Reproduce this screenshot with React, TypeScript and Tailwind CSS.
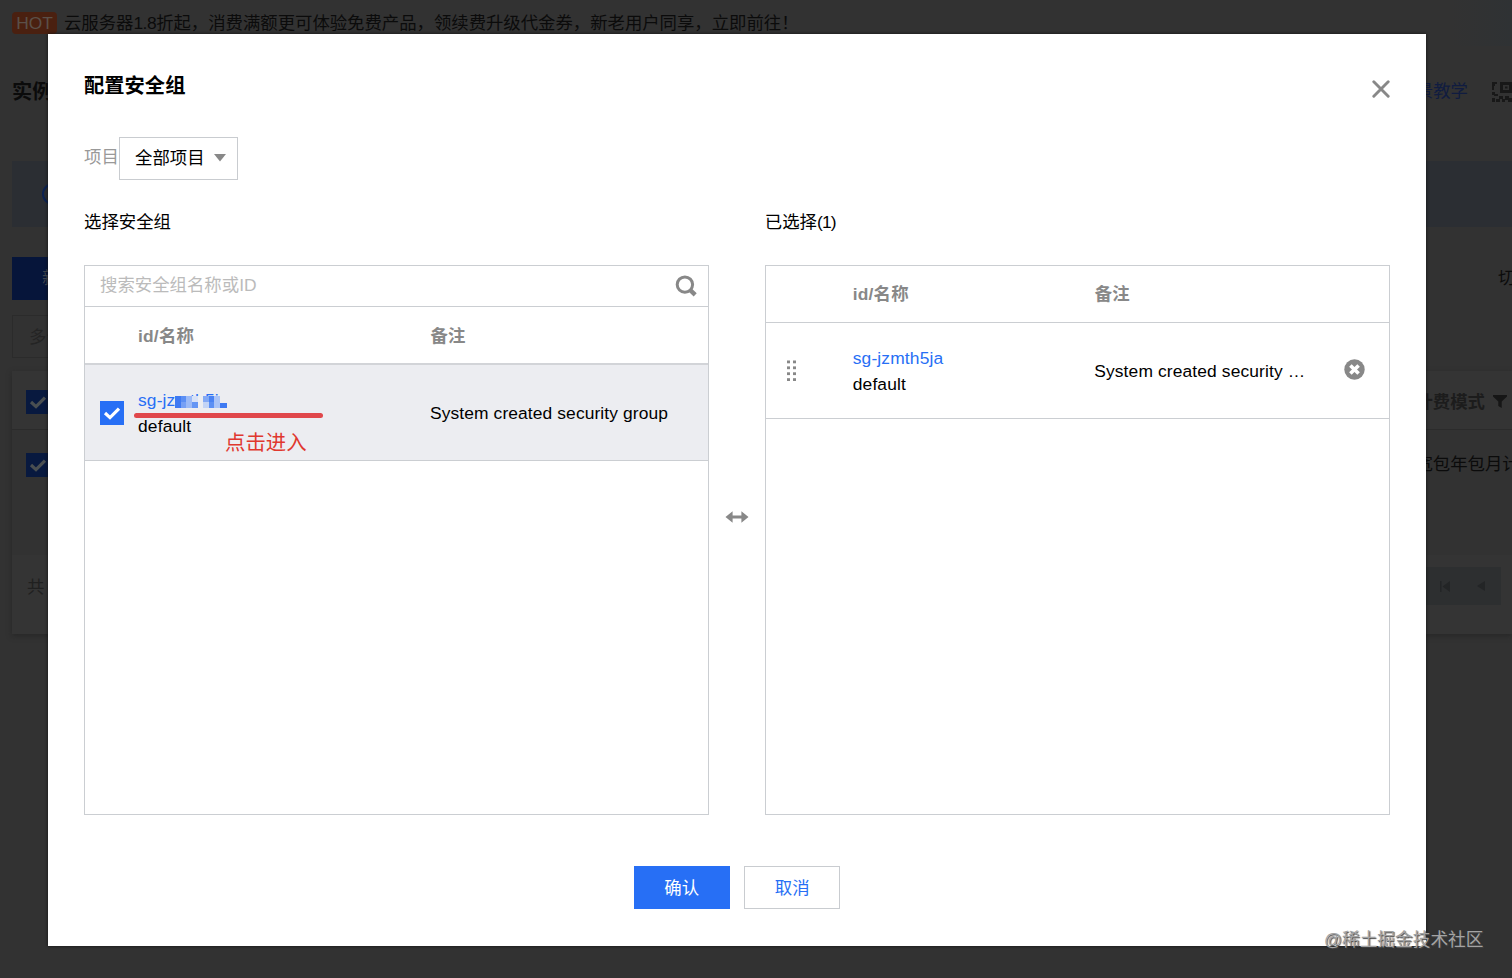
import type { ReactNode } from 'react';

type SecurityGroup = {
  id: string;
  name: string;
  remark: string;
};

const group: SecurityGroup = {
  id: 'sg-jzmth5ja',
  name: 'default',
  remark: 'System created security group',
};

const CheckMark = ({ className }: { className?: string }) => (
  <svg viewBox="0 0 24 24" className={className} fill="none">
    <path d="M5 12l5 4.6L19 7.6" stroke="currentColor" strokeWidth="3.2" />
  </svg>
);

const SearchIcon = () => (
  <svg width="22" height="22" viewBox="0 0 22 22" fill="none">
    <circle cx="9.9" cy="9.6" r="7.7" stroke="#888" strokeWidth="3" />
    <path d="M15 14.8l5.2 5" stroke="#888" strokeWidth="4.4" />
  </svg>
);

const CloseIcon = () => (
  <svg width="18" height="18" viewBox="0 0 18 18" fill="none">
    <path d="M1.8 1.8l14.4 14.4M16.2 1.8l-14.4 14.4" stroke="#888" strokeWidth="2.9" strokeLinecap="round" />
  </svg>
);

const RemoveIcon = () => (
  <svg width="21" height="21" viewBox="0 0 21 21" fill="none">
    <circle cx="10.5" cy="10.5" r="10.2" fill="#888" />
    <path d="M6.4 6.4l8.2 8.2M14.6 6.4l-8.2 8.2" stroke="#fff" strokeWidth="3.6" />
  </svg>
);

const DragHandle = () => (
  <svg width="10" height="22" viewBox="0 0 10 22" fill="#888">
    {[0.5, 6.4, 12.3, 18.2].map((y) => (
      <g key={y}>
        <rect x="0" y={y} width="3" height="2.8" />
        <rect x="6" y={y} width="3" height="2.8" />
      </g>
    ))}
  </svg>
);

const SwapIcon = () => (
  <svg width="24" height="12" viewBox="0 0 24 12" fill="#888">
    <path d="M0.5 6L7.6 0.2V4.4H16.4V0.2L23.5 6L16.4 11.8V7.6H7.6V11.8Z" />
  </svg>
);

const FilterIcon = () => (
  <svg width="14" height="13" viewBox="0 0 14 13" fill="#161616">
    <path d="M0 0H14V1.5L8.7 6.5V13L5.3 11V6.5L0 1.5Z" />
  </svg>
);

const QrIcon = () => (
  <svg width="20" height="20" viewBox="0 0 20 20" fill="#181818">
    <path d="M0 0H5V2H3V4H2V8H0ZM8 0H20V11H8ZM11 3V8H17V3ZM13 4.5H15.5V6.5H13ZM0 10H3V12H6V14H2V13H0ZM7 14H11V17H8V20H4V17H7ZM0 16H3V20H0ZM13 14H17V16H20V20H16V18H13V20H10V17H13Z" fillRule="evenodd" />
  </svg>
);

// pixelated strip hiding the tail of the group id
const Mosaic = () => (
  <svg className="absolute left-[37px] top-[9px]" width="55" height="13" viewBox="0 0 55 13" shapeRendering="crispEdges">
    <rect width="54" height="13" fill="#ecedf1" />
    <rect x="0" y="0" width="6" height="12" fill="#3f7af2" />
    <rect x="6" y="0" width="5" height="6" fill="#5b8ff4" />
    <rect x="6" y="6" width="5" height="6" fill="#76a0f5" />
    <rect x="11" y="0" width="6" height="12" fill="#9bbaf7" />
    <rect x="17" y="0" width="6" height="6" fill="#d7e1f6" />
    <rect x="17" y="6" width="6" height="6" fill="#6495f4" />
    <rect x="28" y="0" width="6" height="6" fill="#83a9f5" />
    <rect x="28" y="6" width="6" height="6" fill="#c3d4f6" />
    <rect x="34" y="0" width="5" height="6" fill="#4a83f3" />
    <rect x="34" y="6" width="5" height="6" fill="#5c90f4" />
    <rect x="39" y="0" width="6" height="12" fill="#aac4f7" />
    <rect x="45" y="7" width="7" height="5" fill="#3f7af2" />
  </svg>
);

const Annotation = () => (
  <div className="pointer-events-none absolute left-[134px] top-[413px]">
    <div className="h-[4.5px] w-[189px] rounded-full bg-[#e0474b]" />
    <div className="ml-[91px] mt-[11.5px] text-[20.4px] leading-[28px] text-[#e0382f]">点击进入</div>
  </div>
);

const Panel = ({ title, children }: { title: ReactNode; children: ReactNode }) => (
  <div className="w-[625.5px]">
    <div className="h-[27px] pt-px leading-[27px]">{title}</div>
    <div className="mt-[29.5px] h-[550px] border border-[#cbced2]">{children}</div>
  </div>
);

const PageBehind = () => (
  <div className="h-full w-full overflow-hidden text-[#0b0b0b]">
    <div className="flex h-[46px] items-center whitespace-nowrap bg-[linear-gradient(90deg,#323232_0,#323232_96%,#2f3234_100%)] pl-3">
      <span className="mr-[7px] h-[22px] w-[45px] rounded-sm bg-[#4a2010] text-center leading-[22px] text-[#5b5049]">HOT</span>
      <span className="tracking-[-0.03px]">云服务器<span className="tracking-[-0.5px]">1.8</span>折起，消费满额更可体验免费产品，领续费升级代金券，新老用户同享，立即前往！</span>
    </div>
    <div className="flex h-[90px] items-center justify-between whitespace-nowrap pl-3 pt-0.5">
      <span className="text-[20.3px] font-bold">实例</span>
      <div className="flex items-center">
        <span className="mb-0.5 mr-6 text-[#101c40]">场景教学</span>
        <QrIcon />
      </div>
    </div>
    <div className="ml-3 mt-[25px] flex h-[66px] items-center bg-[#2b2e33] pl-[30px]">
      <span className="h-[22px] w-[22px] rounded-full border-2 border-[#0b2252]" />
    </div>
    <div className="ml-3 mt-[30px] flex h-[43px] justify-between">
      <div className="w-24 bg-[#06153a] pl-[30px] leading-[43px] text-[#41454d]">新建</div>
      <div className="w-3.5 overflow-hidden whitespace-nowrap leading-[43px]">切换</div>
    </div>
    <div className="ml-3 mt-[15px] h-[43px] w-[300px] border border-[#2b2b2b] pl-4 leading-[43px] text-[#242424]">多个</div>
    <div className="ml-3 mt-[13px] h-[263px] bg-[#343434] shadow-[0_2px_5px_#272727]">
      <div className="flex h-[59px] items-center justify-between border-b border-[#2b2b2b] pl-3.5 pr-[5px] pt-[3px]">
        <CheckMark className="h-6 w-6 bg-[#08193f] text-[#4a4f51]" />
        <div className="flex items-center gap-2 font-bold text-[#1c1c1c]">
          计费模式 <FilterIcon />
        </div>
      </div>
      <div className="flex h-[125px] justify-between bg-[#323232] pl-3.5 pt-[23px]">
        <CheckMark className="h-6 w-6 bg-[#08193f] text-[#4a4f51]" />
        <div className="h-6 w-[114px] overflow-hidden whitespace-nowrap leading-[22px]">带宽包年包月计</div>
      </div>
      <div className="flex justify-between pl-[15px] pt-3">
        <span className="pt-[7px] text-[#202020]">共</span>
        <div className="mr-[11px] flex h-[38px] w-[80px] items-center justify-end gap-[27px] bg-[#2d2f30] pr-4">
          <svg width="10" height="11" viewBox="0 0 10 11" fill="#232526">
            <path d="M0 0H1.5V11H0ZM10 0V11L2.5 5.5Z" />
          </svg>
          <svg width="8" height="10" viewBox="0 0 8 10" fill="#232526">
            <path d="M8 0V10L0 5Z" />
          </svg>
        </div>
      </div>
    </div>
  </div>
);

const Dialog = () => (
  <div className="absolute left-[48px] top-[33.5px] h-[912.5px] w-[1378px] bg-white px-9 shadow-[0_0_3px_#111]">
    <div className="flex h-[103px] items-start justify-between">
      <h3 className="mt-[38.5px] text-[20.3px] font-bold leading-[28px]">配置安全组</h3>
      <button className="mt-[46px]">
        <CloseIcon />
      </button>
    </div>
    <div className="flex h-[43.5px]">
      <span className="mt-[7px] w-[35px] leading-[27px] text-[#999]">项目</span>
      <button className="flex w-[119px] items-center border border-[#c9ccd0] pl-[15px]">
        <span>全部项目</span>
        <svg className="ml-[9px]" width="12" height="8" viewBox="0 0 12 8" fill="#888">
          <path d="M0 0H12L6 7.5Z" />
        </svg>
      </button>
    </div>
    <div className="mt-[28px] flex">
      <Panel title="选择安全组">
        <div className="flex h-[41.5px] items-center justify-between border-b border-[#cbced2] pl-[15px] pr-[11px]">
          <span className="pb-px text-[#bbb]">搜索安全组名称或ID</span>
          <SearchIcon />
        </div>
        <div className="flex h-[58px] items-center border-b-2 border-[#d2d4d8] pl-[53px] pt-px font-bold text-[#888]">
          <span className="w-[292.5px] tracking-[0.2px]">id/名称</span>
          <span>备注</span>
        </div>
        <div className="flex h-[96px] items-center border-b border-[#cbced2] bg-[#ecedf1] pl-[15px]">
          <CheckMark className="mr-3.5 h-6 w-6 bg-[#276ff5] text-white" />
          <div className="relative w-[292px] leading-[26px] tracking-[0.15px]">
            <div className="text-[#276ff5]">{group.id}</div>
            <div>{group.name}</div>
            <Mosaic />
          </div>
          <span className="tracking-[0.11px]">{group.remark}</span>
        </div>
      </Panel>
      <div className="mt-[303px] w-[55.5px] pl-[16px]">
        <SwapIcon />
      </div>
      <Panel title={<>已选择<span className="tracking-[-0.8px]">(1)</span></>}>
        <div className="flex h-[57.5px] items-center border-b border-[#cbced2] pl-[87px] font-bold text-[#888]">
          <span className="w-[242px] tracking-[0.2px]">id/名称</span>
          <span>备注</span>
        </div>
        <div className="flex h-[96px] items-center border-b border-[#cbced2] pl-[21.5px] pt-px">
          <DragHandle />
          <div className="ml-[55.5px] w-[241.5px] leading-[26px] tracking-[0.15px]">
            <div className="text-[#276ff5]">{group.id}</div>
            <div>{group.name}</div>
          </div>
          <span className="w-[215px] truncate tracking-[0.13px]">{group.remark}</span>
          <button className="mb-[3px] ml-[35px]">
            <RemoveIcon />
          </button>
        </div>
      </Panel>
    </div>
    <div className="mt-[51px] flex justify-center gap-[14.5px]">
      <button className="h-[43.5px] w-[96px] bg-[#276ff5] pt-px text-white">确认</button>
      <button className="h-[43.5px] w-[96px] border border-[#c9ccd0] pt-px text-[#276ff5]">取消</button>
    </div>
  </div>
);

const App = () => {
  return (
    <div className="relative h-[978px] w-[1512px] overflow-hidden bg-[#323232] font-['Liberation_Sans','Noto_Sans_CJK_SC',sans-serif] text-[17.4px] leading-[26px] text-black">
      <PageBehind />
      <Dialog />
      <Annotation />
      <div className="absolute left-[1324px] top-[927px] whitespace-nowrap text-[17.7px] text-[#a3a3a3] [text-shadow:1px_1px_1px_#444]">
        @稀土掘金技术社区
      </div>
    </div>
  );
};

export default App;
